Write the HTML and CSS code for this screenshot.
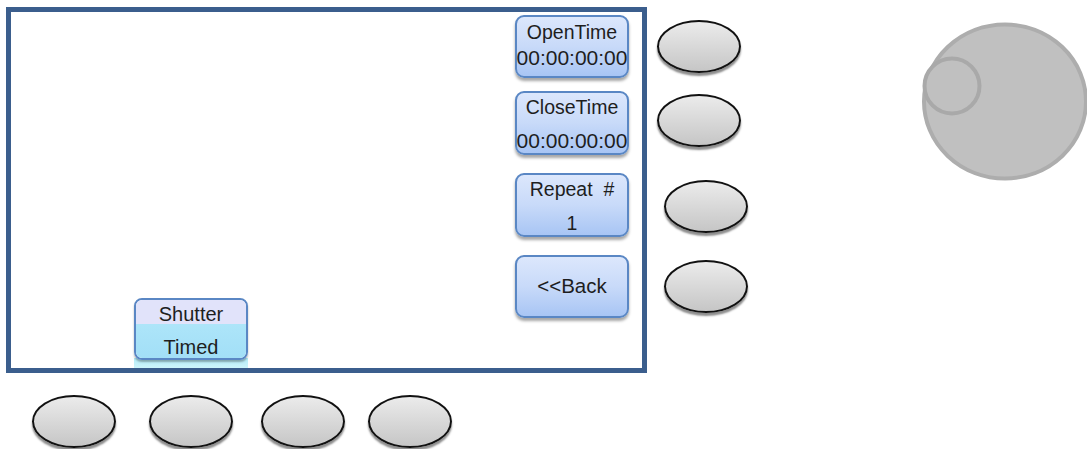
FILE: index.html
```html
<!DOCTYPE html>
<html lang="en">
<head>
<meta charset="utf-8">
<title>Shutter Timed</title>
<link rel="stylesheet" href="styles.css">
</head>
<body>
<div class="device">
  <div class="top-row">
    <div class="screen">
      <div class="screen-left">
        <div class="shutter">
          <div class="shutter-btn">
            <span class="shutter-top">Shutter</span>
            <span class="shutter-bottom">Timed</span>
          </div>
        </div>
      </div>
      <div class="softkeys">
        <div class="softkey tight"><span>OpenTime</span><span class="time">00:00:00:00</span></div>
        <div class="softkey spread"><span>CloseTime</span><span class="time">00:00:00:00</span></div>
        <div class="softkey spread"><span>Repeat&nbsp; #</span><span>1</span></div>
        <div class="softkey single"><span class="back">&lt;&lt;Back</span></div>
      </div>
    </div>
    <div class="side-keys">
      <div class="oval k1"></div>
      <div class="oval k2"></div>
      <div class="oval k3 shifted"></div>
      <div class="oval k4 shifted"></div>
    </div>
    <svg class="knob" width="167" height="162" viewBox="0 0 167 162">
      <ellipse cx="85" cy="80.5" rx="81" ry="77" fill="#c0c0c0" stroke="#adadad" stroke-width="4"/>
      <circle cx="32" cy="65" r="27.5" fill="#c0c0c0" stroke="#a9a9a9" stroke-width="4"/>
    </svg>
  </div>
  <div class="bottom-row">
    <div class="oval b1"></div>
    <div class="oval b2"></div>
    <div class="oval b3"></div>
    <div class="oval b4"></div>
  </div>
</div>
</body>
</html>
```

FILE: styles.css
```css
* { box-sizing: border-box; }

html, body {
  margin: 0;
  padding: 0;
  background: #ffffff;
}

body {
  width: 1087px;
  height: 449px;
  overflow: hidden;
  font-family: "Liberation Sans", Arial, sans-serif;
  color: #1e1e1e;
}

.device {
  padding: 7px 0 0 6px;
}

.top-row {
  display: flex;
  align-items: flex-start;
}

.screen {
  width: 641px;
  height: 366px;
  border: 5px solid #3b5e8d;
  display: flex;
  background: #ffffff;
}

.screen-left {
  flex: 1;
  display: flex;
  align-items: flex-end;
  padding-left: 123px;
}

.shutter {
  width: 114px;
  height: 70px;
  background: linear-gradient(#b4ecf8, #cdf5fb) no-repeat bottom / 100% 10px;
}

.shutter-btn {
  width: 114px;
  height: 62px;
  border: 2px solid #5a87c4;
  border-radius: 8px;
  overflow: hidden;
  display: flex;
  flex-direction: column;
  box-shadow: 0 2px 2px rgba(0, 0, 0, 0.3);
  font-size: 20px;
}

.shutter-top {
  height: 24px;
  line-height: 28px;
  text-align: center;
  background: #e1e3fa;
}

.shutter-bottom {
  flex: 1;
  display: flex;
  align-items: flex-end;
  justify-content: center;
  line-height: 22px;
  background: linear-gradient(#ade5f9, #a2dff7);
}

.softkeys {
  display: flex;
  flex-direction: column;
  margin: 3px 13px 0 0;
}

.softkey {
  width: 114px;
  height: 64px;
  border: 2px solid #5a87c4;
  border-radius: 9px;
  background: linear-gradient(#dce7fc 0%, #c8daf9 50%, #a8c5f4 100%);
  box-shadow: 0 3px 3px rgba(0, 0, 0, 0.35);
  display: flex;
  flex-direction: column;
  align-items: center;
  font-size: 19.5px;
  white-space: nowrap;
  margin-bottom: 18px;
}

.softkey.tight {
  height: 63px;
  margin-bottom: 13px;
  justify-content: center;
  line-height: 25px;
  padding-bottom: 4px;
}

.softkey .time {
  font-size: 21px;
}

.softkey .back {
  font-size: 20.5px;
}

.softkey.spread {
  justify-content: space-between;
  line-height: 24px;
  padding: 2px 0 0;
}

.softkey.single {
  height: 63px;
  justify-content: center;
  line-height: 24px;
  padding-bottom: 2px;
}

.side-keys {
  display: flex;
  flex-direction: column;
  margin-left: 10px;
  padding-top: 13px;
  width: 91px;
}

.oval {
  width: 84px;
  height: 53px;
  border-radius: 50%;
  border: 2.5px solid #111111;
  background: linear-gradient(#ebebeb, #c6c6c6);
  box-shadow: 0 3px 2px rgba(0, 0, 0, 0.45);
}

.k2 { margin-top: 21px; }
.k3 { margin-top: 33px; }
.k4 { margin-top: 27px; }
.shifted { margin-left: 7px; }

.knob {
  display: block;
  margin-left: auto;
  margin-top: 14px;
}

.bottom-row {
  display: flex;
  margin-top: 22px;
  padding-left: 26px;
}

.b2 { margin-left: 33px; }
.b3 { margin-left: 28px; }
.b4 { margin-left: 23px; }
```
